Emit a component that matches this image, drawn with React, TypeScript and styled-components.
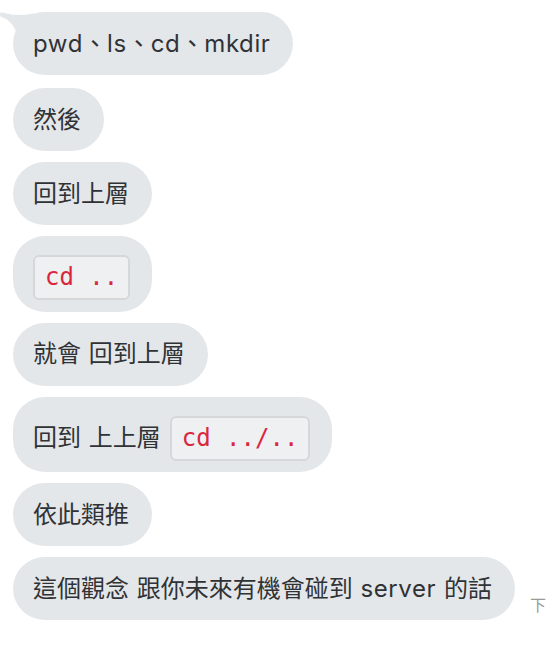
import React from "react";
import styled, { createGlobalStyle } from "styled-components";

const GlobalStyle = createGlobalStyle`
  html, body {
    margin: 0;
    padding: 0;
    background: #ffffff;
    overflow: hidden;
  }
  body {
    font-family: "Inter", "Noto Sans CJK TC", sans-serif;
  }
`;

const Thread = styled.div`
  display: flex;
  flex-direction: column;
  align-items: flex-start;
  gap: 11px;
  padding: 12px 0 0 13px;
`;

const Row = styled.div`
  display: flex;
  align-items: flex-end;
  gap: 15px;
  white-space: nowrap;
`;

const Bubble = styled.div<{ $code?: boolean; $first?: boolean }>`
  position: relative;
  display: flex;
  align-items: center;
  gap: 9px;
  box-sizing: border-box;
  padding: ${(p) => (p.$code ? "19px 22px 11.5px 20px" : "17.5px 23px 17.5px 20px")};
  margin-bottom: ${(p) => (p.$first ? "2px" : "0")};
  border-radius: 32px;
  background: #e4e7ea;
  color: #303336;
  font-family: "Inter", "Noto Sans CJK TC", sans-serif;
  font-size: 24px;
  line-height: 28px;
  word-spacing: 1px;
  white-space: nowrap;
`;

const Text = styled.span`
  position: relative;
  white-space: pre;
`;

const Latin = styled.span`
  letter-spacing: 0.6px;
`;

const Code = styled.code`
  display: inline-block;
  box-sizing: border-box;
  padding: 6px 10px;
  border: 2px solid #d5d7d9;
  border-radius: 6px;
  background: #eff0f2;
  color: #d8283e;
  font-family: "DejaVu Sans Mono", "Liberation Mono", monospace;
  font-size: 24px;
  line-height: 29px;
  white-space: pre;
`;

const Tail = styled.svg`
  position: absolute;
  left: -13px;
  top: 0;
  width: 40px;
  height: 30px;
  overflow: visible;
`;

const Time = styled.span`
  margin-bottom: 5px;
  color: #9a9a9a;
  font-family: "Inter", "Noto Sans CJK TC", sans-serif;
  font-size: 16px;
  line-height: 20px;
`;

export default function App() {
  return (
    <>
      <GlobalStyle />
      <Thread>
        <Bubble $first>
          <Tail viewBox="0 0 40 30" aria-hidden="true">
            <path
              d="M0.2 1.2 Q0.8 0.2 2.5 0.4 Q18 5 34 1.6 L34 26 L15.8 18.8 Q11 8 0.4 4.6 Q-0.4 2.8 0.2 1.2 Z"
              fill="#e4e7ea"
            />
          </Tail>
          <Text>
            <Latin>pwd</Latin>、<Latin>ls</Latin>、<Latin>cd</Latin>、<Latin>mkdir</Latin>
          </Text>
        </Bubble>
        <Bubble>
          <Text>然後</Text>
        </Bubble>
        <Bubble>
          <Text>回到上層</Text>
        </Bubble>
        <Bubble $code>
          <Code>cd ..</Code>
        </Bubble>
        <Bubble>
          <Text>就會 回到上層</Text>
        </Bubble>
        <Bubble $code>
          <Text>回到 上上層</Text>
          <Code>cd ../..</Code>
        </Bubble>
        <Bubble>
          <Text>依此類推</Text>
        </Bubble>
        <Row>
          <Bubble>
            <Text>
              這個觀念 跟你未來有機會碰到 <Latin>server</Latin> 的話
            </Text>
          </Bubble>
          <Time>下午 3:12</Time>
        </Row>
      </Thread>
    </>
  );
}
